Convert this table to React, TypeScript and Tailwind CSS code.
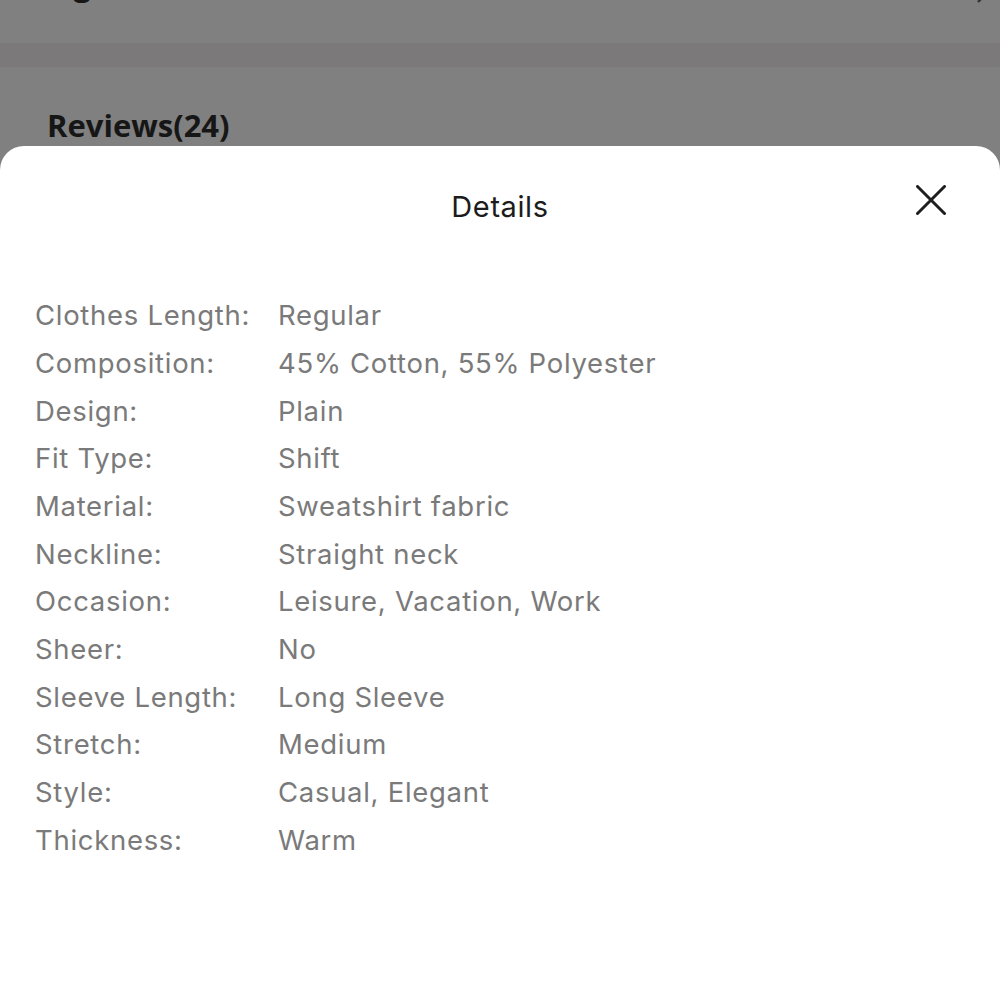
const DETAILS: [string, string][] = [
  ['Clothes Length:', 'Regular'],
  ['Composition:', '45% Cotton, 55% Polyester'],
  ['Design:', 'Plain'],
  ['Fit Type:', 'Shift'],
  ['Material:', 'Sweatshirt fabric'],
  ['Neckline:', 'Straight neck'],
  ['Occasion:', 'Leisure, Vacation, Work'],
  ['Sheer:', 'No'],
  ['Sleeve Length:', 'Long Sleeve'],
  ['Stretch:', 'Medium'],
  ['Style:', 'Casual, Elegant'],
  ['Thickness:', 'Warm'],
]

export default function App() {
  return (
    <div className="flex h-[1000px] w-[1000px] flex-col overflow-hidden bg-[#808080] font-['Inter','Liberation_Sans',sans-serif]">
      {/* Page behind the sheet (dimmed), scrolled so the top row is cut off */}
      <div className="flex h-[43px] items-start justify-between overflow-hidden pl-[47px] pr-[12px]">
        <span className="mt-[-31px] font-['Open_Sans','Noto_Sans',sans-serif] text-[31px] font-bold leading-[31px] text-[#161616]">
          Sign in
        </span>
        <svg width="12" height="20" viewBox="0 0 12 20" className="mt-[-16px] text-[#333]">
          <path d="M2 2l8 8-8 8" fill="none" stroke="currentColor" strokeWidth="2.4" />
        </svg>
      </div>
      <div className="h-[24px] bg-[#7b7979]" />
      <div className="flex h-[79px] items-end px-[47px]">
        <h3 className="font-['Open_Sans','Noto_Sans',sans-serif] text-[31px] font-bold leading-[42px] text-[#161616]">
          Reviews(24)
        </h3>
      </div>

      {/* Bottom sheet */}
      <div className="flex flex-1 flex-col rounded-t-[24px] bg-white">
        <div className="relative flex h-[124px] items-center justify-center pb-[2px]">
          <h2 className="text-[29px] tracking-[0.6px] text-[#1c1c1c]">Details</h2>
          <button className="absolute right-[54px] top-[39px] text-[#1f1f1f]">
            <svg width="30" height="30" viewBox="0 0 30 30">
              <path d="M1.5 1.5L28.5 28.5M28.5 1.5L1.5 28.5" stroke="currentColor" strokeWidth="3" strokeLinecap="round" />
            </svg>
          </button>
        </div>

        <div className="flex flex-col px-[35px] pt-[22px]">
          {DETAILS.map(([label, value]) => (
            <div key={label} className="flex h-[47.7px] items-center text-[27.5px] tracking-[0.7px] text-[#7a7a7a]">
              <span className="w-[243px] shrink-0">{label}</span>
              <span>{value}</span>
            </div>
          ))}
        </div>
      </div>
    </div>
  )
}
